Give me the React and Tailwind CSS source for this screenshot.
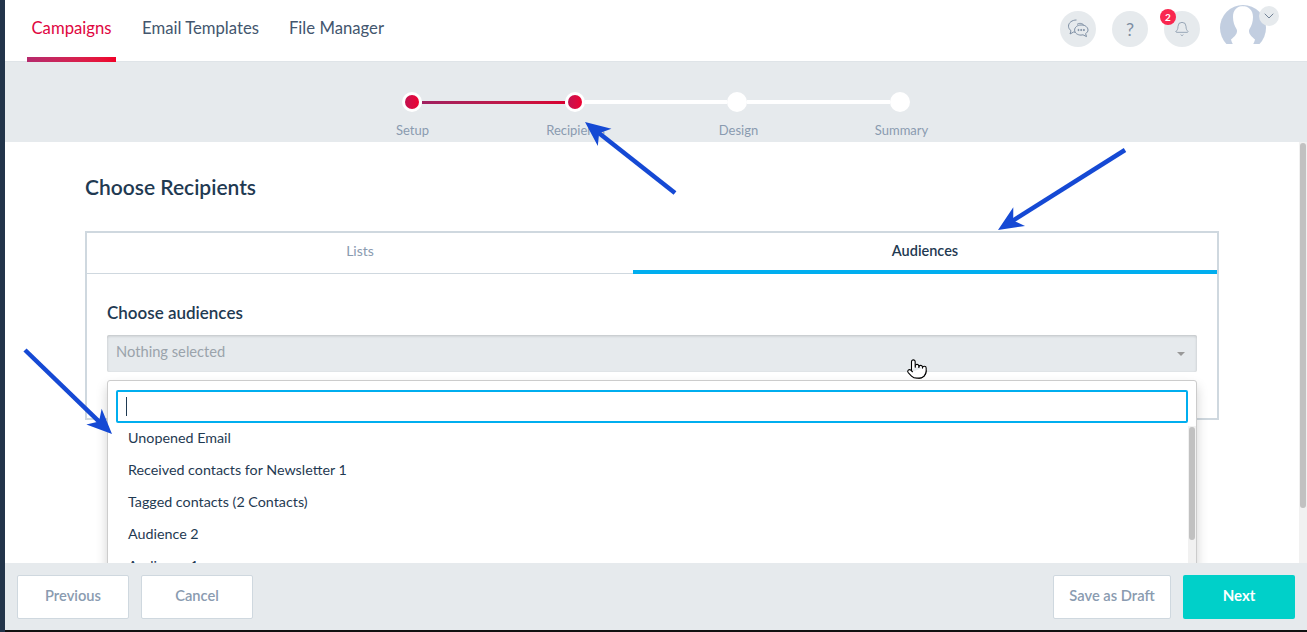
import React from "react";
import { Bell, ChevronDown, Pointer } from "lucide-react";

function Arrow({ x1, y1, x2, y2 }) {
  const len = Math.hypot(x2 - x1, y2 - y1);
  const ux = (x2 - x1) / len;
  const uy = (y2 - y1) / len;
  const at = (back, side) => `${x2 - ux * back - uy * side},${y2 - uy * back + ux * side}`;
  return (
    <g>
      <line x1={x1} y1={y1} x2={x2 - ux * 14} y2={y2 - uy * 14} stroke="#1549d4" strokeWidth="4.500" />
      <polygon points={[at(0, 0), at(25, 11), at(18, 0), at(25, -11)].join(" ")} fill="#1549d4" />
    </g>
  );
}

function IconCircle({ children, badge }) {
  return (
    <div className="relative w-9 h-9 rounded-full bg-[#e6eaed] flex items-center justify-center text-[#7d8ea3]">
      {children}
      {badge && (
        <span className="absolute -left-[4px] -top-[2px] w-4 h-4 rounded-full bg-[#f9274f] text-white text-[10px] font-bold flex items-center justify-center leading-none">
          {badge}
        </span>
      )}
    </div>
  );
}

function Step({ active }) {
  return (
    <div className="w-5 h-5 shrink-0 rounded-full bg-white flex items-center justify-center">
      {active && <div className="w-[14px] h-[14px] rounded-full bg-gradient-to-r from-[#c2104f] to-[#ee0030]" />}
    </div>
  );
}

const footerBtn = "h-11 pb-[3px] bg-white border border-[#cfd8df] rounded-[2px] text-[14.7px] font-semibold text-[#8a9bb0] flex items-center justify-center";

export default function App() {
  return (
    <div className="relative w-[1307px] h-[632px] overflow-hidden flex bg-white text-[#1f3a52] font-['Lato','Noto_Sans',sans-serif]">
      <div className="w-[5px] bg-[#22344a]" />
      <div className="flex-1 min-w-0 flex flex-col">
        <header className="h-[62px] shrink-0 bg-white border-b border-[#dfe4e8] flex items-stretch pl-[22px] pr-[41px]">
          <nav className="flex items-stretch text-[16.7px]">
            <a className="relative w-[89px] flex items-center justify-center pb-[4px] text-[#e0063f]">
              Campaigns
              <span className="absolute left-0 right-0 -bottom-px h-[5px] bg-gradient-to-r from-[#b62a6d] to-[#f00028]" />
            </a>
            <a className="ml-[26px] flex items-center pb-[4px] text-[#43566e]">Email Templates</a>
            <a className="ml-[30px] flex items-center pb-[4px] text-[#43566e]">File Manager</a>
          </nav>
          <div className="ml-auto flex items-start pt-[11px] gap-4">
            <IconCircle>
              <svg width="22" height="20" viewBox="0 0 22 20" fill="none" stroke="#7d8ea3" strokeWidth="1">
                <path d="M9.500 1C5 1 1.500 3.700 1.500 7.200c0 1.800 1 3.400 2.500 4.500L3 15l3.600-2c.5.100 1 .2 1.600.2" />
                <path d="M17 6.500C15.500 4 12 3.800 10 5.500" />
                <path d="M14 6c-3.600 0-6.400 2.300-6.400 5.100s2.800 5 6.400 5c.7 0 1.400-.1 2-.3l3.500 1.800-.9-3c1.500-.9 2.400-2.200 2.400-3.500 0-2.800-2.800-5.100-6-5.100z" />
                <circle cx="11.500" cy="11" r=".6" fill="#7d8ea3" />
                <circle cx="14.200" cy="11" r=".6" fill="#7d8ea3" />
                <circle cx="16.900" cy="11" r=".6" fill="#7d8ea3" />
              </svg>
            </IconCircle>
            <IconCircle><span className="text-[18px] leading-none">?</span></IconCircle>
            <IconCircle badge="2"><Bell size={16} strokeWidth={1.1} /></IconCircle>
            <div className="relative ml-[4px] -mt-[6px] w-[46px] h-[39px]">
              <div className="w-[46px] h-[39px] overflow-hidden">
                <svg width="46" height="46" viewBox="0 0 46 46">
                  <circle cx="23" cy="23" r="23" fill="#c2cee0" />
                  <path d="M23 1c-6 0-10 4-10 11 0 5 1.500 9 3.500 12 1 2 .5 4-1 6-1 1.500-3 3-4.500 4.500C13 42 18 46 23 46s10-4 12-11.500c-1.500-1.500-3.500-3-4.500-4.500-1.500-2-2-4-1-6 2-3 3.500-7 3.500-12 0-7-4.500-11-10.500-11z" fill="#fff" />
                </svg>
              </div>
              <div className="absolute left-[39px] top-px w-5 h-5 rounded-full bg-[#e6eaed] flex items-center justify-center text-[#5f7389]">
                <ChevronDown size={16} strokeWidth={1.3} />
              </div>
            </div>
          </div>
        </header>

        <section className="h-[80px] shrink-0 bg-[#e6eaed] flex flex-col items-center pt-[30px]">
          <div className="flex items-center">
            <Step active />
            <div className="w-[143px] h-[3px] bg-gradient-to-r from-[#a0205f] to-[#d80030]" />
            <Step active />
            <div className="w-[142px] h-1 bg-white" />
            <Step />
            <div className="w-[143px] h-1 bg-white" />
            <Step />
          </div>
          <div className="mt-[9px] ml-[2px] flex text-[13px] leading-[18px] text-[#8a9bb0]">
            <span className="w-[163px] text-center">Setup</span>
            <span className="w-[163px] text-center">Recipients</span>
            <span className="w-[163px] text-center">Design</span>
            <span className="w-[163px] text-center">Summary</span>
          </div>
        </section>

        <main className="relative flex-1 min-h-0 overflow-hidden bg-white flex">
          <div className="flex-1 min-w-0 pl-20 pr-[80px] pt-[32px]">
            <h1 className="text-[21px] leading-[26px] font-semibold text-[#1f3a52]">Choose Recipients</h1>
            <div className="mt-[31px] h-[189px] border-2 border-[#cfd8df]">
              <div className="flex h-[41px] text-[14px]">
                <div className="w-[546px] pb-[6px] border-b border-[#cfd8df] text-[#8a9bb0] flex items-center justify-center">Lists</div>
                <div className="flex-1 pb-[1px] border-b-4 border-[#00aeef] font-semibold text-[14.5px] text-[#1f3a52] flex items-center justify-center">Audiences</div>
              </div>
              <div className="px-[20px] pt-[29px]">
                <div className="text-[17px] leading-[20px] font-semibold text-[#1f3a52]">Choose audiences</div>
                <div className="mt-[12px] h-[37px] bg-[#e6eaed] rounded-[2px] shadow-[inset_0_1px_3px_rgba(0,0,0,0.18)] pl-[9px] pr-3 pb-[5px] flex items-center justify-between text-[14.7px] text-[#9aa3ab]">
                  Nothing selected
                  <span className="w-0 h-0 mt-[5px] border-x-[4px] border-x-transparent border-t-[4px] border-t-[#999]" />
                </div>
              </div>
            </div>
          </div>
          <div className="w-2 shrink-0 bg-[#f1f1f1] px-px pt-px">
            <div className="h-[365px] rounded-[3px] bg-[#c1c1c1]" />
          </div>

          <div className="absolute left-[102px] top-[238px] w-[1090px] h-[200px] bg-white border border-[#ccc] rounded-[3px] shadow-[0_6px_12px_rgba(0,0,0,0.18)] overflow-hidden">
            <div className="mx-[8px] mt-[9px] h-[33px] border-2 border-[#00aeef] rounded-[2px] flex items-center pl-[8px]">
              <span className="w-px h-[19px] bg-[#1f3a52]" />
            </div>
            <div className="flex -mt-px">
              <ul className="flex-1 pl-5 pb-[3px] text-[14.3px] text-[#1f3a52]">
                {["Unopened Email", "Received contacts for Newsletter 1", "Tagged contacts (2 Contacts)", "Audience 2", "Audience 1"].map((t) => (
                  <li key={t} className="h-8 pb-[1px] flex items-center">{t}</li>
                ))}
              </ul>
              <div className="w-2 shrink-0 mt-[4px] bg-[#f1f1f1] px-px pt-px h-[160px]">
                <div className="h-[113px] rounded-[3px] bg-[#c1c1c1]" />
              </div>
            </div>
          </div>
        </main>

        <footer className="h-[67px] shrink-0 bg-[#e6eaed] flex items-start pt-3 pl-3 pr-3">
          <button className={`${footerBtn} w-28`}>Previous</button>
          <button className={`${footerBtn} w-28 ml-3`}>Cancel</button>
          <button className={`${footerBtn} w-[118px] ml-auto`}>Save as Draft</button>
          <button className="h-11 w-28 ml-3 pb-[3px] bg-[#00d0c9] rounded-[2px] text-[15px] font-bold text-white flex items-center justify-center">Next</button>
        </footer>
        <div className="h-[2px] shrink-0 bg-[#111]" />
      </div>

      <svg className="absolute inset-0 pointer-events-none" width="1307" height="632">
        <Arrow x1={675} y1={193} x2={585} y2={122} />
        <Arrow x1={1125} y1={150} x2={998} y2={230} />
        <Arrow x1={25} y1={350} x2={112} y2={434} />
      </svg>
      <div className="absolute left-[906px] top-[358px] text-black">
        <Pointer size={22} strokeWidth={1.2} fill="#fff" />
      </div>
    </div>
  );
}
